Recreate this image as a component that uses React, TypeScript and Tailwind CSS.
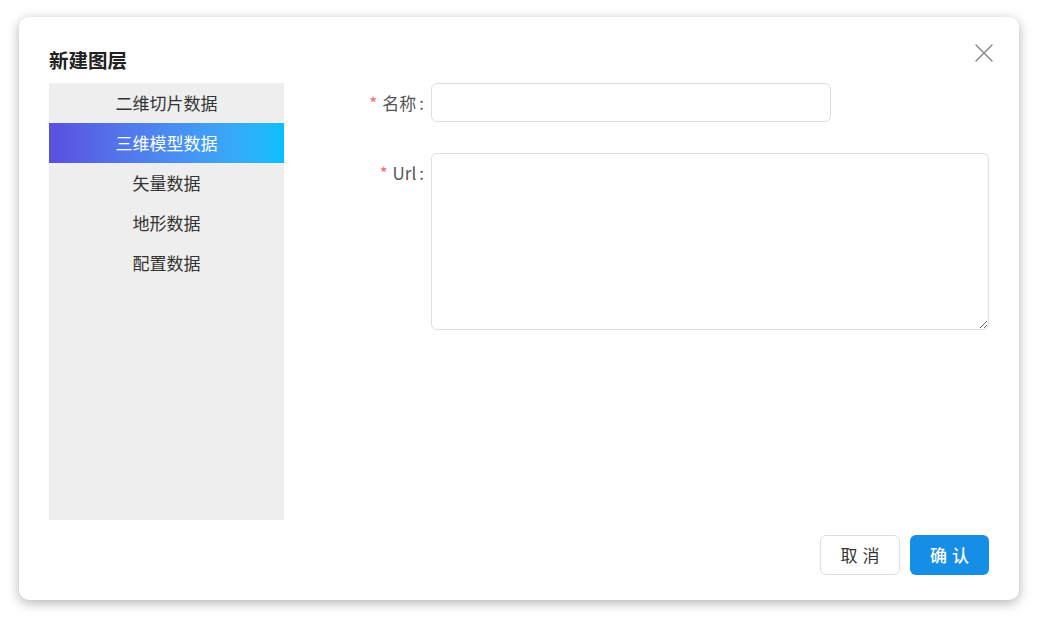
import { X } from 'lucide-react';

const layerTypes = ['二维切片数据', '三维模型数据', '矢量数据', '地形数据', '配置数据'];

const App = () => {
  const active = 1;

  return (
    <div
      className="min-h-[620px] bg-white pt-[17px] pl-[19px]"
      style={{ fontFamily: '"Noto Sans CJK SC", "Noto Sans", sans-serif' }}
    >
      <div className="relative w-[1000px] h-[583px] bg-white rounded-[10px] shadow-[0_3px_12px_rgba(0,0,0,0.3)] px-[30px] pt-[30px] pb-[25px] flex flex-col">
        {/* Close */}
        <button className="absolute top-[20px] right-[19px] text-[#8c8c8c]">
          <X className="w-[32px] h-[32px]" strokeWidth={1.1} />
        </button>

        {/* Header */}
        <h2 className="h-[26px] leading-[26px] text-[19.5px] font-bold text-[#222]">新建图层</h2>

        {/* Body */}
        <div className="mt-[10px] flex">
          {/* Type list */}
          <ul className="w-[235px] h-[437px] bg-[#eeeeee]">
            {layerTypes.map((t, i) => (
              <li
                key={t}
                className={
                  i === active
                    ? 'h-[40px] leading-[40px] text-center text-[17px] text-white bg-gradient-to-r from-[#5a4fe0] to-[#03c0fe]'
                    : 'h-[40px] leading-[40px] text-center text-[17px] text-[#333]'
                }
              >
                {t}
              </li>
            ))}
          </ul>

          {/* Form */}
          <div className="flex-1 flex flex-col gap-[30px]">
            <div className="flex">
              <label className="w-[147px] pr-[7px] h-[40px] leading-[40px] text-right text-[17px] text-[#555]">
                <span className="text-[#f56c6c] mr-[5px]">*</span>名称<span className="ml-[3px]">:</span>
              </label>
              <input className="w-[400px] h-[39px] border border-[#dcdfe6] rounded-[6px] px-3 outline-none" />
            </div>
            <div className="flex">
              <label className="w-[147px] pr-[7px] h-[40px] leading-[40px] text-right text-[17px] text-[#555]">
                <span className="text-[#f56c6c] mr-[5px]">*</span>Url<span className="ml-[3px]">:</span>
              </label>
              <textarea className="flex-1 h-[177px] border border-[#dcdfe6] rounded-[6px] px-3 py-2 outline-none" />
            </div>
          </div>
        </div>

        {/* Footer */}
        <div className="mt-[15px] flex justify-end gap-[10px]">
          <button className="w-[80px] h-[40px] border border-[#dcdfe6] rounded-[6px] text-[17px] text-[#333] tracking-[5px] pl-[5px]">
            取消
          </button>
          <button className="w-[79px] h-[40px] rounded-[6px] bg-[#178ee6] text-[17px] text-white font-medium tracking-[5px] pl-[5px]">
            确认
          </button>
        </div>
      </div>
    </div>
  );
};

export default App;
